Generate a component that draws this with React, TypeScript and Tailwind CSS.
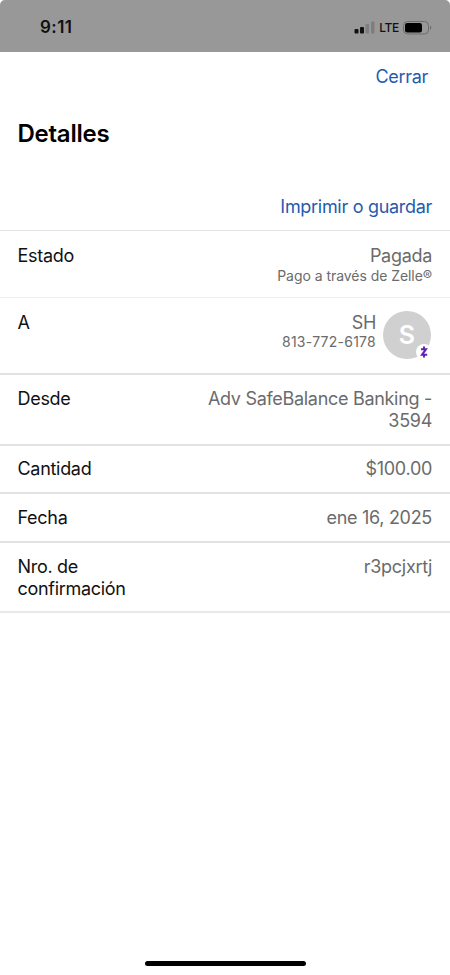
import React from 'react';

const StatusBar = () => (
  <div className="flex h-[52px] shrink-0 items-center justify-between rounded-t-[5px] bg-[#989898] pl-10 pr-[18px] pt-[3px]">
    <span className="text-[17px] font-semibold tracking-[0.45px] text-[#111]">9:11</span>
    <div className="flex items-center gap-1">
      <svg width="21" height="13" viewBox="0 0 21 13">
        <rect x="0.5" y="8" width="4" height="4.5" rx="1" fill="#111" />
        <rect x="6" y="6" width="4" height="6.5" rx="1" fill="#111" />
        <rect x="11.5" y="3" width="3.5" height="9.5" rx="1" fill="#7e7e7e" />
        <rect x="17" y="0.5" width="3.5" height="12" rx="1" fill="#7e7e7e" />
      </svg>
      <span className="text-xs font-medium tracking-[-0.3px] text-[#111]">LTE</span>
      <svg width="29" height="14" viewBox="0 0 29 14">
        <rect x="0.5" y="0.5" width="25" height="12.5" rx="4" fill="none" stroke="#6c6c6c" />
        <rect x="2" y="2" width="17" height="9.5" rx="2.2" fill="#000" />
        <path d="M27 4.8C28.8 5.4 28.8 8.2 27 8.8Z" fill="#6c6c6c" />
      </svg>
    </div>
  </div>
);

const Avatar = () => (
  <div className="relative -mt-[1.5px] ml-[7px] mr-[1px] size-12 shrink-0 rounded-full bg-[#d0d0d0]">
    <span className="flex h-full items-center justify-center text-[25px] font-semibold tracking-normal text-white">S</span>
    <div className="absolute -right-[1px] -bottom-[1px] flex size-4 items-center justify-center rounded-full bg-white">
      <svg width="8" height="12" viewBox="0 0 8 12" fill="none" stroke="#6420b4" strokeWidth="2">
        <path d="M1 3.2H6L2 8.8H7.2M4 0.5V3M4 9V11.5" />
      </svg>
    </div>
  </div>
);

type RowProps = {
  label: string;
  className: string;
  children: React.ReactNode;
};

const Row = ({ label, className, children }: RowProps) => (
  <div className={`flex justify-between pl-[17.5px] pr-[18px] text-lg leading-[22px] tracking-[-0.3px] ${className}`}>
    <div className="w-[130px] text-[#111]">{label}</div>
    <div className="text-right text-[#6b6b6b]">{children}</div>
  </div>
);

const App = () => {
  return (
    <div className="flex h-[975px] w-[450px] flex-col bg-white font-['Inter',sans-serif]">
      <StatusBar />
      <div className="flex h-[50px] items-center justify-end pr-[22px] text-lg tracking-[-0.3px] text-[#1f5bb0]">Cerrar</div>
      <h1 className="h-[90px] px-[17.5px] pt-[16px] text-2xl font-semibold tracking-[-0.25px] text-black">Detalles</h1>
      <div className="flex h-[39px] items-start justify-end border-b border-[#e4e4e4] pr-[18px] text-lg leading-[30px] tracking-[-0.3px] text-[#1f5bb0]">
        Imprimir o guardar
      </div>
      <Row label="Estado" className="h-[67px] border-b border-[#ededed] pt-[14px]">
        <p>Pagada</p>
        <p className="text-sm leading-[18px] tracking-[-0.05px]">Pago a través de Zelle®</p>
      </Row>
      <Row label="A" className="h-[77px] border-b-2 border-[#e2e2e2] pt-[14px]">
        <div className="flex">
          <div>
            <p>SH</p>
            <p className="text-sm leading-4 tracking-[0.25px]">813-772-6178</p>
          </div>
          <Avatar />
        </div>
      </Row>
      <Row label="Desde" className="h-[71px] border-b-2 border-[#e2e2e2] pt-[13px]">
        <p className="w-[230px]">Adv SafeBalance Banking - 3594</p>
      </Row>
      <Row label="Cantidad" className="h-[48px] border-b-2 border-[#e2e2e2] pt-[12px]">$100.00</Row>
      <Row label="Fecha" className="h-[49px] border-b-2 border-[#e2e2e2] pt-[13px]">ene 16, 2025</Row>
      <Row label="Nro. de confirmación" className="h-[70px] border-b-2 border-[#e9e9e9] pt-[13px]">r3pcjxrtj</Row>
      <div className="mx-auto mb-[9px] mt-auto h-[5px] w-[161px] rounded-full bg-black" />
    </div>
  );
};

export default App;
